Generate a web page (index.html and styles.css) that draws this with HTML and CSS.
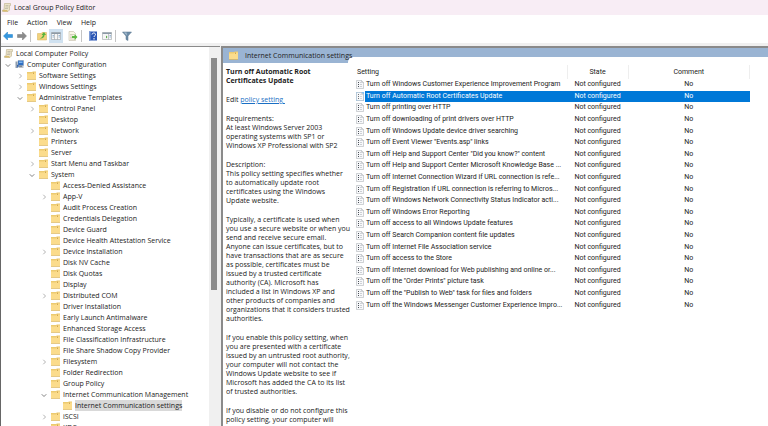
FILE: index.html
```html
<!DOCTYPE html>
<html lang="en">
<head>
  <meta charset="UTF-8" />
  <meta name="viewport" content="width=device-width, initial-scale=1" />
  <title>Local Group Policy Editor</title>
  <link rel="stylesheet" href="styles.css">
</head>
<body>

  <!-- shared icons -->
  <svg class="defs" aria-hidden="true">
    <symbol id="scroll" viewBox="0 0 18 18">
      <path d="M5 1h12v4h-2v9l-3 3H1v-3h3z" fill="#ece3c8" stroke="#b3a578" />
      <path d="M7 5h6M7 8h6M6 11h6" stroke="#a09c90" />
      <path d="M1 14h9l2 3H3z" fill="#d9bd70" />
    </symbol>
    <symbol id="folder" viewBox="0 0 18 18">
      <path d="M0 2h10l2-1h6v16H0z" fill="#ecca70" />
      <path d="M0 5h10l2-2h6v13H0z" fill="#fbdc8c" />
      <path d="M12 3h2v3h-2z" fill="#cfa850" />
      <path d="M0 16h18v1H0z" fill="#d4ae55" />
    </symbol>
    <symbol id="computer" viewBox="0 0 18 18">
      <path d="M6 1h11v10H6z" fill="#2f6fc4" stroke="#8396ad" />
      <path d="M8 3h7v3H8z" fill="#7fb6ee" />
      <path d="M1 3h4v13H1z" fill="#8f9dad" />
      <path d="M9 11h5v2h3v2H7z" fill="#7d8896" />
      <path d="M4 9l4 3-3 4z" fill="#1d4f9e" />
    </symbol>
    <symbol id="policy" viewBox="0 0 16 18">
      <path d="M1 1h10l4 4v12H1z" fill="#f7f8fa" stroke="#a3a8ae" />
      <path d="M11 1v4h4" fill="none" stroke="#a3a8ae" />
      <path d="M4 4h2v2H4zM4 8h2v2H4zM4 12h2v2H4z" fill="#4b5058" />
      <path d="M8 5h2M8 9h4M8 13h4" stroke="#a0a6ae" />
    </symbol>
    <symbol id="open" viewBox="0 0 8 8">
      <path d="M1 3l3 3 3-3" fill="none" stroke="#555" />
    </symbol>
    <symbol id="closed" viewBox="0 0 8 8">
      <path d="M3 1l3 3-3 3" fill="none" stroke="#999" />
    </symbol>
  </svg>

  <header class="titlebar">
    <svg class="icon"><use href="#scroll" /></svg>
    <h1>Local Group Policy Editor</h1>
  </header>

  <nav class="menu">
    <button type="button">File</button>
    <button type="button">Action</button>
    <button type="button">View</button>
    <button type="button">Help</button>
  </nav>

  <div class="toolbar">
    <button type="button" aria-label="Back">
      <svg viewBox="0 0 20 20"><path d="M1 10l8-8v5h10v6H9v5z" fill="#3497e0" stroke="#2380c6" /></svg>
    </button>
    <button type="button" aria-label="Forward">
      <svg viewBox="0 0 20 20"><path d="M19 10l-8-8v5H1v6h10v5z" fill="#8b8b8b" stroke="#777" /></svg>
    </button>
    <span class="divider"></span>
    <button type="button" aria-label="Up one level">
      <svg viewBox="0 0 20 20">
        <path d="M1 5h7l2-2h9v15H1z" fill="#f2d27c" stroke="#d5b056" />
        <path d="M5 15c4-1 6-3 7-7l-3 0 5-6 4 6h-3c0 5-4 8-10 7z" fill="#58b53c" />
      </svg>
    </button>
    <button type="button" class="active" aria-label="Show console tree">
      <svg viewBox="0 0 20 20">
        <path d="M1 3h18v14H1z" fill="#f6f6f6" stroke="#8d9499" />
        <path d="M1 3h18v3H1z" fill="#8d9aa6" />
        <path d="M7 6v11M13 6v11" stroke="#8d9499" />
        <path d="M3 9h3M3 12h3M15 9h3M15 12h3" stroke="#3d78b5" />
      </svg>
    </button>
    <button type="button" class="export" aria-label="Export list">
      <svg viewBox="0 0 20 20">
        <path d="M2 1h9l4 4v14H2z" fill="#faf6e8" stroke="#b8b09a" />
        <path d="M4 7h8M4 10h5M4 13h5M4 16h8" stroke="#b0aa98" />
        <path d="M8 10h5V6l6 6-6 6v-4H8z" fill="#5cba43" />
      </svg>
    </button>
    <span class="divider"></span>
    <button type="button" aria-label="Help">
      <svg viewBox="0 0 20 20">
        <path d="M2 1h16v18H2z" fill="#2b57b5" />
        <path d="M2 1h3v18H2z" fill="#7f9cd6" />
        <path d="M8 7c0-4 7-4 7 0 0 3-3 2-3 5M12 14v3" fill="none" stroke="#fff" stroke-width="2" />
      </svg>
    </button>
    <button type="button" aria-label="Show action pane">
      <svg viewBox="0 0 20 20">
        <path d="M1 3h18v14H1z" fill="#f6f6f6" stroke="#8d9499" />
        <path d="M1 3h18v3H1z" fill="#8d9aa6" />
        <path d="M13 6v11" stroke="#8d9499" />
        <path d="M8 9l3 3-3 3z" fill="#4aa436" />
        <path d="M15 9h3M15 12h3" stroke="#3d78b5" />
      </svg>
    </button>
    <span class="divider"></span>
    <button type="button" aria-label="Filter">
      <svg viewBox="0 0 20 20">
        <path d="M1 2h18l-7 8v9l-4-2v-7z" fill="#6f8ea8" stroke="#55738c" />
        <path d="M4 3h5l1 6z" fill="#a9c0d2" />
      </svg>
    </button>
  </div>

  <main class="console">
    <nav class="tree">
      <div class="node"><svg class="icon"><use href="#scroll" /></svg><span class="label">Local Computer Policy</span></div>
      <ul>
        <li>
          <div class="node"><button type="button" aria-label="Collapse"><svg><use href="#open" /></svg></button><svg class="icon"><use href="#computer" /></svg><span class="label">Computer Configuration</span></div>
          <ul>
            <li class="node"><button type="button" aria-label="Expand"><svg><use href="#closed" /></svg></button><svg class="icon"><use href="#folder" /></svg><span class="label">Software Settings</span></li>
            <li class="node"><button type="button" aria-label="Expand"><svg><use href="#closed" /></svg></button><svg class="icon"><use href="#folder" /></svg><span class="label">Windows Settings</span></li>
            <li>
              <div class="node"><button type="button" aria-label="Collapse"><svg><use href="#open" /></svg></button><svg class="icon"><use href="#folder" /></svg><span class="label">Administrative Templates</span></div>
              <ul>
                <li class="node"><button type="button" aria-label="Expand"><svg><use href="#closed" /></svg></button><svg class="icon"><use href="#folder" /></svg><span class="label">Control Panel</span></li>
                <li class="node leaf"><svg class="icon"><use href="#folder" /></svg><span class="label">Desktop</span></li>
                <li class="node"><button type="button" aria-label="Expand"><svg><use href="#closed" /></svg></button><svg class="icon"><use href="#folder" /></svg><span class="label">Network</span></li>
                <li class="node leaf"><svg class="icon"><use href="#folder" /></svg><span class="label">Printers</span></li>
                <li class="node leaf"><svg class="icon"><use href="#folder" /></svg><span class="label">Server</span></li>
                <li class="node"><button type="button" aria-label="Expand"><svg><use href="#closed" /></svg></button><svg class="icon"><use href="#folder" /></svg><span class="label">Start Menu and Taskbar</span></li>
                <li>
                  <div class="node"><button type="button" aria-label="Collapse"><svg><use href="#open" /></svg></button><svg class="icon"><use href="#folder" /></svg><span class="label">System</span></div>
                  <ul>
                    <li class="node leaf"><svg class="icon"><use href="#folder" /></svg><span class="label">Access-Denied Assistance</span></li>
                    <li class="node"><button type="button" aria-label="Expand"><svg><use href="#closed" /></svg></button><svg class="icon"><use href="#folder" /></svg><span class="label">App-V</span></li>
                    <li class="node leaf"><svg class="icon"><use href="#folder" /></svg><span class="label">Audit Process Creation</span></li>
                    <li class="node leaf"><svg class="icon"><use href="#folder" /></svg><span class="label">Credentials Delegation</span></li>
                    <li class="node leaf"><svg class="icon"><use href="#folder" /></svg><span class="label">Device Guard</span></li>
                    <li class="node leaf"><svg class="icon"><use href="#folder" /></svg><span class="label">Device Health Attestation Service</span></li>
                    <li class="node"><button type="button" aria-label="Expand"><svg><use href="#closed" /></svg></button><svg class="icon"><use href="#folder" /></svg><span class="label">Device Installation</span></li>
                    <li class="node leaf"><svg class="icon"><use href="#folder" /></svg><span class="label">Disk NV Cache</span></li>
                    <li class="node leaf"><svg class="icon"><use href="#folder" /></svg><span class="label">Disk Quotas</span></li>
                    <li class="node leaf"><svg class="icon"><use href="#folder" /></svg><span class="label">Display</span></li>
                    <li class="node"><button type="button" aria-label="Expand"><svg><use href="#closed" /></svg></button><svg class="icon"><use href="#folder" /></svg><span class="label">Distributed COM</span></li>
                    <li class="node leaf"><svg class="icon"><use href="#folder" /></svg><span class="label">Driver Installation</span></li>
                    <li class="node leaf"><svg class="icon"><use href="#folder" /></svg><span class="label">Early Launch Antimalware</span></li>
                    <li class="node leaf"><svg class="icon"><use href="#folder" /></svg><span class="label">Enhanced Storage Access</span></li>
                    <li class="node leaf"><svg class="icon"><use href="#folder" /></svg><span class="label">File Classification Infrastructure</span></li>
                    <li class="node leaf"><svg class="icon"><use href="#folder" /></svg><span class="label">File Share Shadow Copy Provider</span></li>
                    <li class="node"><button type="button" aria-label="Expand"><svg><use href="#closed" /></svg></button><svg class="icon"><use href="#folder" /></svg><span class="label">Filesystem</span></li>
                    <li class="node leaf"><svg class="icon"><use href="#folder" /></svg><span class="label">Folder Redirection</span></li>
                    <li class="node leaf"><svg class="icon"><use href="#folder" /></svg><span class="label">Group Policy</span></li>
                    <li>
                      <div class="node"><button type="button" aria-label="Collapse"><svg><use href="#open" /></svg></button><svg class="icon"><use href="#folder" /></svg><span class="label">Internet Communication Management</span></div>
                      <ul>
                        <li class="node leaf current"><svg class="icon"><use href="#folder" /></svg><span class="label">Internet Communication settings</span></li>
                      </ul>
                    </li>
                    <li class="node"><button type="button" aria-label="Expand"><svg><use href="#closed" /></svg></button><svg class="icon"><use href="#folder" /></svg><span class="label">iSCSI</span></li>
                    <li class="node leaf"><svg class="icon"><use href="#folder" /></svg><span class="label">KDC</span></li>
                  </ul>
                </li>
              </ul>
            </li>
          </ul>
        </li>
      </ul>
    </nav>
    <div class="scrollbar"><div class="thumb"></div></div>

    <section class="details">
      <div class="summary">
        <h2 class="path"><svg class="icon"><use href="#folder" /></svg>Internet Communication settings</h2>
        <div class="description">
          <h3>Turn off Automatic Root Certificates Update</h3>
          <p>Edit <a href="#policy">policy setting&nbsp;</a></p>
          <p>Requirements:<br>At least Windows Server 2003 operating systems with SP1 or Windows XP Professional with SP2</p>
          <p>Description:<br>This policy setting specifies whether to automatically update root certificates using the Windows<br>Update website.</p>
          <p>Typically, a certificate is used when you use a secure website or when you send and receive secure email. Anyone can issue certificates, but to have transactions that are as secure as possible, certificates must be issued by a trusted certificate authority (CA). Microsoft has<br>included a list in Windows XP and other products of companies and organizations that it considers trusted authorities.</p>
          <p>If you enable this policy setting, when you are presented with a certificate issued by an untrusted root authority, your computer will not contact the Windows Update website to see if Microsoft has added the CA to its list of trusted authorities.</p>
          <p>If you disable or do not configure this policy setting, your computer will</p>
        </div>
      </div>

      <div class="list">
        <table>
          <colgroup><col class="glyph"><col class="name"><col class="state"><col></colgroup>
          <thead>
            <tr><th colspan="2">Setting</th><th>State</th><th>Comment</th></tr>
          </thead>
          <tbody>
            <tr><td><svg><use href="#policy" /></svg></td><td>Turn off Windows Customer Experience Improvement Program</td><td>Not configured</td><td>No</td></tr>
            <tr class="selected"><td><svg><use href="#policy" /></svg></td><td>Turn off Automatic Root Certificates Update</td><td>Not configured</td><td>No</td></tr>
            <tr><td><svg><use href="#policy" /></svg></td><td>Turn off printing over HTTP</td><td>Not configured</td><td>No</td></tr>
            <tr><td><svg><use href="#policy" /></svg></td><td>Turn off downloading of print drivers over HTTP</td><td>Not configured</td><td>No</td></tr>
            <tr><td><svg><use href="#policy" /></svg></td><td>Turn off Windows Update device driver searching</td><td>Not configured</td><td>No</td></tr>
            <tr><td><svg><use href="#policy" /></svg></td><td>Turn off Event Viewer "Events.asp" links</td><td>Not configured</td><td>No</td></tr>
            <tr><td><svg><use href="#policy" /></svg></td><td>Turn off Help and Support Center "Did you know?" content</td><td>Not configured</td><td>No</td></tr>
            <tr><td><svg><use href="#policy" /></svg></td><td>Turn off Help and Support Center Microsoft Knowledge Base ...</td><td>Not configured</td><td>No</td></tr>
            <tr><td><svg><use href="#policy" /></svg></td><td>Turn off Internet Connection Wizard if URL connection is refe...</td><td>Not configured</td><td>No</td></tr>
            <tr><td><svg><use href="#policy" /></svg></td><td>Turn off Registration if URL connection is referring to Micros...</td><td>Not configured</td><td>No</td></tr>
            <tr><td><svg><use href="#policy" /></svg></td><td>Turn off Windows Network Connectivity Status Indicator acti...</td><td>Not configured</td><td>No</td></tr>
            <tr><td><svg><use href="#policy" /></svg></td><td>Turn off Windows Error Reporting</td><td>Not configured</td><td>No</td></tr>
            <tr><td><svg><use href="#policy" /></svg></td><td>Turn off access to all Windows Update features</td><td>Not configured</td><td>No</td></tr>
            <tr><td><svg><use href="#policy" /></svg></td><td>Turn off Search Companion content file updates</td><td>Not configured</td><td>No</td></tr>
            <tr><td><svg><use href="#policy" /></svg></td><td>Turn off Internet File Association service</td><td>Not configured</td><td>No</td></tr>
            <tr><td><svg><use href="#policy" /></svg></td><td>Turn off access to the Store</td><td>Not configured</td><td>No</td></tr>
            <tr><td><svg><use href="#policy" /></svg></td><td>Turn off Internet download for Web publishing and online or...</td><td>Not configured</td><td>No</td></tr>
            <tr><td><svg><use href="#policy" /></svg></td><td>Turn off the "Order Prints" picture task</td><td>Not configured</td><td>No</td></tr>
            <tr><td><svg><use href="#policy" /></svg></td><td>Turn off the "Publish to Web" task for files and folders</td><td>Not configured</td><td>No</td></tr>
            <tr><td><svg><use href="#policy" /></svg></td><td>Turn off the Windows Messenger Customer Experience Impro...</td><td>Not configured</td><td>No</td></tr>
          </tbody>
        </table>
      </div>
    </section>
  </main>

</body>
</html>
```
FILE: styles.css
```css
:root {
  --text: #222;
  --line: #8a8a8a;
  --blue: #0078d7;
  --band: #9ab4d3;
  --font-family: 'Open Sans', 'Noto Sans', sans-serif;
}

* {
  box-sizing: border-box;
}

body {
  margin: 0;
  height: 100vh;
  display: flex;
  flex-direction: column;
  overflow: hidden;
  border-left: 1px solid #666;
  background-color: #fff;
  color: var(--text);
  font-family: var(--font-family);
  font-size: 7px;
}

.defs {
  display: none;
}

h1,
h2,
h3,
p,
ul {
  margin: 0;
  padding: 0;
  font-size: 7px;
}

h1,
h2 {
  font-weight: normal;
}

button {
  padding: 0;
  border: none;
  background: none;
  color: inherit;
  font: inherit;
}

svg {
  display: block;
  flex: none;
}

.icon {
  width: 9px;
  height: 9px;
}

.titlebar {
  display: flex;
  align-items: center;
  gap: 3px;
  height: 15px;
  padding-left: 1px;
  background-color: #f8edf5;
}

.menu {
  display: flex;
  align-items: center;
  gap: 9px;
  height: 14px;
  padding-left: 6px;
}

.toolbar {
  display: flex;
  align-items: center;
  height: 14px;
}

.toolbar button {
  display: grid;
  place-items: center;
  width: 14px;
  height: 14px;
}

.toolbar .active {
  background-color: #cfe1f0;
}

.toolbar svg {
  width: 10px;
  height: 10px;
}

.toolbar .export {
  margin-left: 3px;
}

.divider {
  width: 1px;
  height: 12px;
  margin: 0 4px 0 1px;
  background-color: #c4c4c4;
}

.console {
  flex: 1;
  min-height: 0;
  display: flex;
  border-top: 3px solid #f0f0f0;
  background-color: #f0f0f0;
}

/* left pane */
.tree {
  flex: 0 0 208px;
  overflow: hidden;
  padding: 1px 0 0 3px;
  border-top: 1px solid var(--line);
  background-color: #fff;
}

.tree ul {
  list-style: none;
}

.tree ul ul {
  padding-left: 12px;
}

.node {
  display: flex;
  align-items: center;
  gap: 3px;
  height: 11px;
  white-space: nowrap;
}

.node button,
.node button svg {
  width: 8px;
  height: 8px;
}

.node button svg {
  padding: 1px;
}

.leaf {
  padding-left: 11px;
}

.label {
  line-height: 11px;
}

.current .label {
  background-color: #d9d9d9;
}

.scrollbar {
  flex: 0 0 11px;
  padding: 11px 3px 0 2px;
  border-top: 1px solid var(--line);
}

.thumb {
  height: 63%;
  background-color: #8b8b8b;
}

/* right pane */
.details {
  flex: 1;
  min-width: 0;
  display: flex;
  margin-left: 1px;
  border-top: 2px solid var(--line);
  border-left: 2px solid var(--line);
  background-color: var(--band);
}

/* the path text runs over the corner of the list */
.summary {
  z-index: 1;
  flex: 0 0 125px;
  display: flex;
  flex-direction: column;
  min-width: 0;
  min-height: 0;
}

.path {
  display: flex;
  align-items: center;
  gap: 7px;
  height: 15px;
  padding-left: 6px;
  white-space: nowrap;
}

.description {
  flex: 1;
  min-height: 0;
  overflow: hidden;
  margin-right: -3px;
  padding: 4px 0 0 3px;
  background-color: #fff;
  line-height: 9px;
}

.description h3,
.description p {
  margin-bottom: 10px;
}

.description a {
  color: #1a6fc4;
}

.list {
  flex: 1;
  min-width: 0;
  margin-top: 9px;
  padding: 8px 18px 0 8px;
  border-top-left-radius: 5px;
  background-color: #fff;
}

table {
  width: 100%;
  height: 246px;
  table-layout: fixed;
  border-collapse: collapse;
  font-family: Roboto, var(--font-family);
}

.glyph {
  width: 9px;
}

.name {
  width: 202px;
}

.state {
  width: 61px;
}

th,
td {
  padding: 0;
  text-align: center;
  white-space: nowrap;
  line-height: 11px;
}

th {
  height: 14px;
  border-right: 1px solid #eee;
  font-weight: normal;
}

th:first-child {
  padding-left: 1px;
  text-align: left;
}

td:nth-child(2) {
  padding-left: 1px;
  text-align: left;
}

td svg {
  width: 8px;
  height: 9px;
}

.selected td + td {
  background-color: var(--blue);
  color: #fff;
}

.selected svg {
  background-color: #6db3ee;
  opacity: 0.8;
}
```
